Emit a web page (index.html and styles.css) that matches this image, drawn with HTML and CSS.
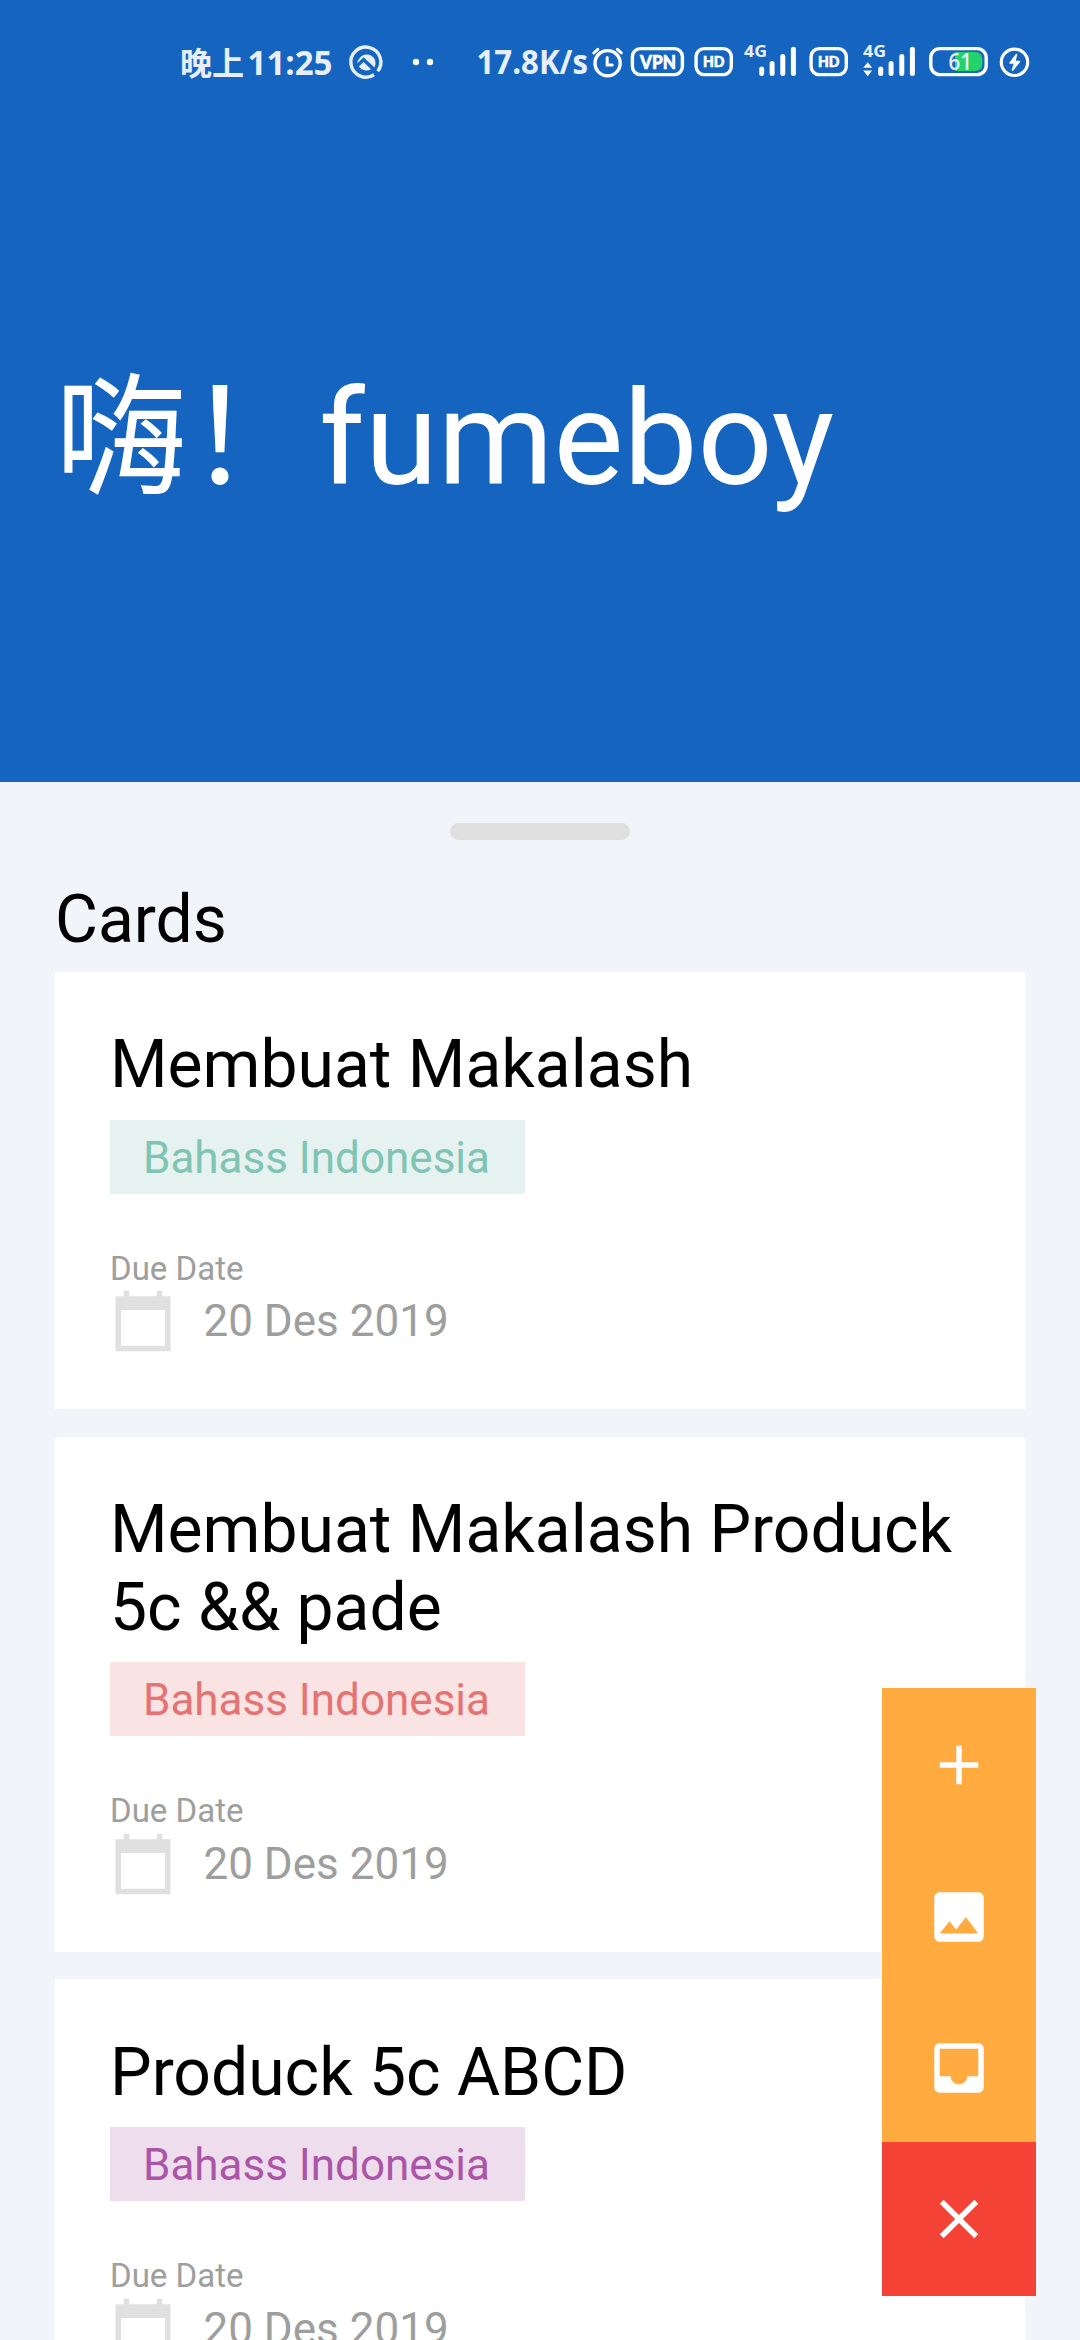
FILE: index.html
```html
<!DOCTYPE html>
<html lang="zh">
<head>
<meta charset="utf-8">
<title>Cards</title>
<link rel="stylesheet" href="styles.css">
</head>
<body>
<svg class="defs" width="0" height="0">
  <symbol id="calendar" viewBox="0 0 24 24"><path d="M22 3h-3V1h-2v2H7V1H5v2H2v20h20V3zm-2 18H4V8h16v13z"/></symbol>
  <symbol id="bars" viewBox="0 0 38 40">
    <path d="M3 27v4.5M13.4 21.5v10M24.1 14.5v17M34.7 7.2v24.3" fill="none" stroke="#fff" stroke-width="5" stroke-linecap="round"/>
  </symbol>
</svg>
<div class="screen">
  <header class="hero">
    <div class="status">
      <span class="clock"><span class="clock-zh">晚上</span><svg class="clock-num" viewBox="0 0 86 40"><text x="0.5" y="32.5" class="num" font-size="33.5" textLength="85" lengthAdjust="spacingAndGlyphs">11:25</text></svg></span>
      <svg class="ring" viewBox="349 42 34 40">
        <path d="M374 74.7A15 15 0 1 1 377.7 71.3" fill="none" stroke="#e8effa" stroke-width="3.4"/>
        <path d="M359 59A8.8 8.8 0 0 1 374.5 67.5L363.6 57.2L357 63.5A9 9 0 0 1 359 59Z" fill="#e8effa"/>
        <path d="M358.8 66.5L363.6 62L371 69.2A9 9 0 0 1 358.8 66.5Z" fill="#e8effa"/>
      </svg>
      <svg class="dots" viewBox="412 42 22 40"><circle cx="416" cy="62" r="3.2" fill="#fff"/><circle cx="430" cy="62" r="3.2" fill="#fff"/></svg>
      <svg class="speed" viewBox="476 42 114 40"><text x="476.5" y="74.3" class="num" font-size="33.5" textLength="111.5" lengthAdjust="spacingAndGlyphs">17.8K/s</text></svg>
      <svg class="alarm" viewBox="592 42 32 40" fill="none" stroke="#fff" stroke-linecap="round">
        <circle cx="607.6" cy="63.2" r="12.6" stroke-width="3.4"/>
        <path d="M593.8 53l4-3.7M621.4 53l-4-3.7" stroke-width="3"/>
        <path d="M607.2 57.5v7.6h5" stroke-width="3"/>
      </svg>
      <svg class="vpn" viewBox="630 42 55 40">
        <rect x="632.4" y="48.6" width="50" height="26" rx="8" fill="none" stroke="#fff" stroke-width="3.4"/>
        <text x="640" y="68.5" class="badge-text" font-size="19" textLength="36" lengthAdjust="spacingAndGlyphs">VPN</text>
      </svg>
      <svg class="hd hd-a" viewBox="0 0 40 40">
        <rect x="2.1" y="6.6" width="35.2" height="26" rx="8" fill="none" stroke="#fff" stroke-width="3.4"/>
        <text x="9" y="25.2" class="badge-text" font-size="15.5" textLength="21.5" lengthAdjust="spacingAndGlyphs">HD</text>
      </svg>
      <svg class="signal signal-a" viewBox="744 42 52 40">
        <text x="744" y="57" class="net" font-size="16.5" textLength="23" lengthAdjust="spacingAndGlyphs">4G</text>
        <use href="#bars" x="758.7" y="42" width="38" height="40"/>
      </svg>
      <svg class="hd hd-b" viewBox="0 0 40 40">
        <rect x="2.1" y="6.6" width="35.2" height="26" rx="8" fill="none" stroke="#fff" stroke-width="3.4"/>
        <text x="9" y="25.2" class="badge-text" font-size="15.5" textLength="21.5" lengthAdjust="spacingAndGlyphs">HD</text>
      </svg>
      <svg class="signal signal-b" viewBox="863 42 52 40">
        <text x="863" y="57" class="net" font-size="16.5" textLength="23" lengthAdjust="spacingAndGlyphs">4G</text>
        <path d="M863.3 67.8l4.4-5.6 4.4 5.6zM863.3 70.6l4.4 5.6 4.4-5.6z" fill="#fff"/>
        <use href="#bars" x="877.7" y="42" width="38" height="40"/>
      </svg>
      <svg class="battery" viewBox="929 42 60 40">
        <path d="M955 52h20q7.3 0 7.3 7.3v4.4q0 7.3-7.3 7.3h-20z" fill="#22d36b"/>
        <rect x="930.8" y="48.6" width="55.4" height="26" rx="9" fill="none" stroke="#fff" stroke-width="3.4"/>
        <text x="948.5" y="70.2" class="num level" font-size="23.5" textLength="23.5" lengthAdjust="spacingAndGlyphs">61</text>
      </svg>
      <svg class="bolt" viewBox="999 42 31 40">
        <circle cx="1014.5" cy="62.3" r="13.2" fill="none" stroke="#fff" stroke-width="3.2"/>
        <path d="M1016.5 54.5l-6.5 8.5h4.5l-2 7.2 7-8.7h-4.7z" fill="#fff" stroke="#fff" stroke-width="1.5" stroke-linejoin="round"/>
      </svg>
    </div>
    <h1 class="greeting">嗨！fumeboy</h1>
  </header>
  <main class="sheet">
    <div class="handle"></div>
    <h2 class="heading">Cards</h2>
    <div class="cards">
      <article class="card">
        <h3 class="title">Membuat Makalash</h3>
        <span class="chip teal">Bahass Indonesia</span>
        <p class="label">Due Date</p>
        <div class="due"><svg class="cal"><use href="#calendar"/></svg><span>20 Des 2019</span></div>
      </article>
      <article class="card">
        <h3 class="title">Membuat Makalash Produck 5c &amp;&amp; pade</h3>
        <span class="chip red">Bahass Indonesia</span>
        <p class="label">Due Date</p>
        <div class="due"><svg class="cal"><use href="#calendar"/></svg><span>20 Des 2019</span></div>
      </article>
      <article class="card">
        <h3 class="title">Produck 5c ABCD</h3>
        <span class="chip purple">Bahass Indonesia</span>
        <p class="label">Due Date</p>
        <div class="due"><svg class="cal"><use href="#calendar"/></svg><span>20 Des 2019</span></div>
      </article>
    </div>
  </main>
  <nav class="fab">
    <button class="action"><svg viewBox="0 0 24 24"><path d="M19 13h-6v6h-2v-6H5v-2h6V5h2v6h6v2z"/></svg></button>
    <button class="action"><svg viewBox="0 0 24 24"><path d="M21 19V5c0-1.1-.9-2-2-2H5c-1.1 0-2 .9-2 2v14c0 1.1.9 2 2 2h14c1.1 0 2-.9 2-2zM8.5 13.5l2.5 3.01L14.5 12l4.5 6H5l3.5-4.5z"/></svg></button>
    <button class="action"><svg viewBox="0 0 24 24"><path d="M19 3H4.99c-1.11 0-1.98.89-1.98 2L3 19c0 1.1.88 2 1.99 2H19c1.1 0 2-.9 2-2V5c0-1.11-.9-2-2-2zm0 12h-4c0 1.66-1.35 3-3 3s-3-1.34-3-3H4.99V5H19v10z"/></svg></button>
    <button class="action close"><svg viewBox="0 0 24 24"><path d="M19 6.41L17.59 5 12 10.59 6.41 5 5 6.41 10.59 12 5 17.59 6.41 19 12 13.41 17.59 19 19 17.59 13.41 12z"/></svg></button>
  </nav>
</div>
</body>
</html>
```
FILE: styles.css
```css
* { box-sizing: border-box; margin: 0; padding: 0; }
body { font-family: Roboto, "Noto Sans CJK SC", sans-serif; font-weight: 400; }
h1, h2, h3 { font-weight: 400; }
.defs { position: absolute; }
.screen {
  position: relative;
  width: 1080px;
  height: 2340px;
  overflow: hidden;
  background: #f1f5fa;
  display: flex;
  flex-direction: column;
}

.hero { flex: none; height: 782px; background: #1565c0; color: #fff; }
.status { height: 124px; padding-left: 180px; display: flex; align-items: center; }
.status svg { flex: none; display: block; height: 40px; overflow: visible; }
.clock { width: 155px; flex: none; display: flex; align-items: center; color: #e8effa; }
.clock-zh { font: 700 32px/40px "Noto Sans CJK SC", sans-serif; width: 67px; padding-bottom: 2px; white-space: nowrap; }
.clock-num { width: 86px; }
.num, .net { font-family: "Open Sans", "Noto Sans", sans-serif; font-weight: 700; fill: #e8effa; }
.level { font-weight: 600; }
.badge-text { font-family: Lato, sans-serif; font-weight: 900; fill: #fff; stroke: #fff; stroke-width: .6px; }
.ring { width: 34px; margin-left: 14px; }
.dots { width: 22px; margin-left: 29px; }
.speed { width: 114px; margin-left: 42px; }
.alarm { width: 32px; margin-left: 2px; }
.vpn { width: 55px; margin-left: 6px; }
.hd { width: 40px; }
.hd-a { margin-left: 8.5px; }
.signal { width: 52px; }
.signal-a { margin-left: 10.5px; }
.hd-b { margin-left: 13px; }
.signal-b { margin-left: 14px; }
.battery { width: 60px; margin-left: 14px; }
.bolt { width: 31px; margin-left: 10px; }

.greeting { margin-top: 229px; padding-left: 55px; font-size: 132px; line-height: 172px; white-space: nowrap; }

.sheet { flex: 1; min-height: 0; padding: 41px 55px 0; }
.handle { width: 180px; height: 16.5px; margin: 0 auto; border-radius: 8.25px; background: #e0e0e0; }
.heading { margin-top: 41px; font-size: 66px; line-height: 77.25px; color: #000; }
.cards { margin-top: 14px; display: flex; flex-direction: column; gap: 27.5px; }
.card { padding: 54.5px 55px 55px; background: #fff; display: flex; flex-direction: column; align-items: flex-start; }
.title { font-size: 66px; line-height: 77.25px; color: #000; }
.chip { margin-top: 16.5px; width: 415px; padding: 11.5px 0 10.5px 33px; font-size: 44px; line-height: 52px; white-space: nowrap; }
.teal { background: #e5f2ef; color: #7fc4b4; }
.red { background: #fae3e3; color: #e57373; }
.purple { background: #eedeed; color: #ab55a8; }
.label { margin-top: 55.75px; font-size: 33px; line-height: 38.5px; color: #9e9e9e; }
.due { display: flex; align-items: center; gap: 27.5px; font-size: 44px; line-height: 52px; color: #9e9e9e; }
.cal { width: 66px; height: 66px; fill: #e0e0e0; }

.fab { position: absolute; right: 44px; bottom: 44px; width: 154px; display: flex; flex-direction: column; }
.action { height: 154px; margin-bottom: -2.75px; border: 0; background: #ffab40; display: flex; align-items: center; justify-content: center; }
.action svg { width: 66px; height: 66px; fill: #fff; }
.close { position: relative; margin-bottom: 0; background: #f44336; }
```
